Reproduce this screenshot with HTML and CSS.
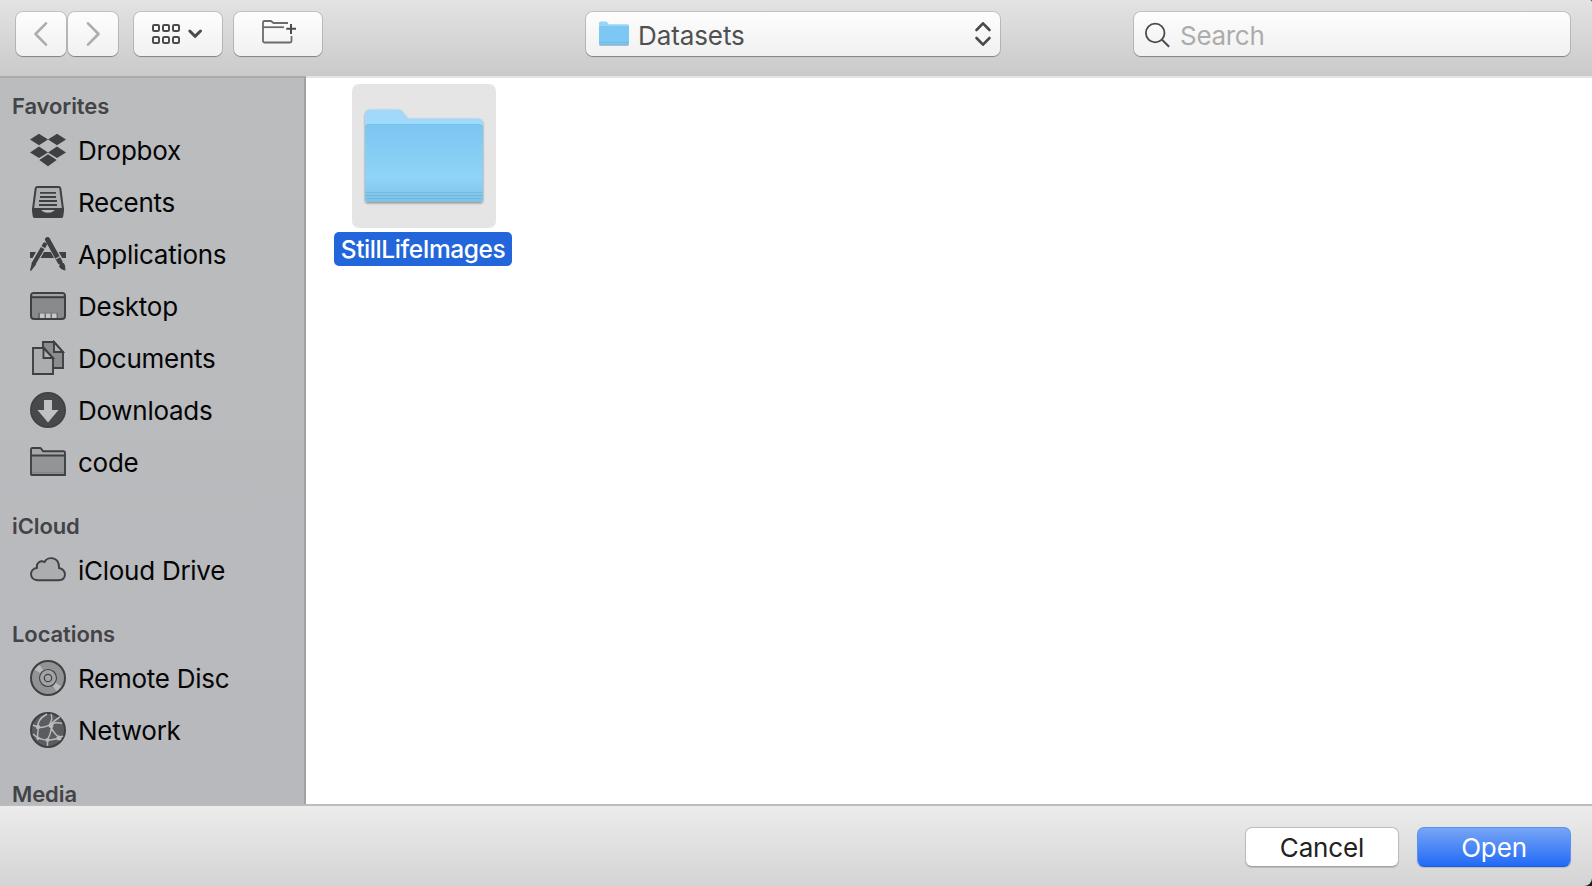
FILE: index.html
```html
<!DOCTYPE html>
<html lang="en">
<head>
<meta charset="utf-8">
<title>Open</title>
<link rel="stylesheet" href="styles.css">
</head>
<body>
<div class="window">
  <header class="toolbar">
    <div class="nav">
      <button class="btn nav-btn" aria-label="Back"><svg width="50" height="44" viewBox="0 0 50 44"><path d="M30 11.300L19.500 22l10.500 10.700" fill="none" stroke="#adadad" stroke-width="2.600" stroke-linecap="round" stroke-linejoin="round"/></svg></button>
      <button class="btn nav-btn" aria-label="Forward"><svg width="50" height="44" viewBox="0 0 50 44"><path d="M20 11.300L30.500 22 20 32.700" fill="none" stroke="#adadad" stroke-width="2.600" stroke-linecap="round" stroke-linejoin="round"/></svg></button>
    </div>
    <button class="btn view-btn" aria-label="View"><svg width="88" height="44" viewBox="-1 -1 88 44" fill="none" stroke="#4b4b4b"><g stroke-width="2"><rect x="18" y="12" width="6" height="6" rx="1.300"/><rect x="28" y="12" width="6" height="6" rx="1.300"/><rect x="38" y="12" width="6" height="6" rx="1.300"/><rect x="18" y="24" width="6" height="6" rx="1.300"/><rect x="28" y="24" width="6" height="6" rx="1.300"/><rect x="38" y="24" width="6" height="6" rx="1.300"/></g><path d="M54.800 18l5.200 5.300L65.500 18" stroke-width="3" stroke-linecap="round" stroke-linejoin="round"/></svg></button>
    <button class="btn folder-btn" aria-label="New Folder"><svg width="88" height="44" viewBox="-1 -1 88 44" fill="none" stroke="#6b6b6b" stroke-width="1.800"><path d="M53 10H38.500l-2.500-2h-6.500q-1.500 0-1.500 1.500V28q0 1.500 1.500 1.500H55q1.500 0 1.500-1.500v-5"/><path d="M28 14.200H49"/><path d="M51.300 15.700h9.700M56 11v10" stroke="#4b4b4b" stroke-width="2"/></svg></button>
    <button class="btn popup"><svg class="mini-folder" width="32" height="28" viewBox="0 0 32 28"><path d="M1 3q0-1.500 1.500-1.500h6L11 4.200h18.500Q31 4.200 31 5.700V24H1z" fill="#98d5f7"/><rect x="1" y="6" width="30" height="19" rx="1" fill="#7cc7f3"/><path d="M1 22.500H31" stroke="#74b9e4"/><path d="M1.500 25.200h29" stroke="#84a8bd"/></svg><span class="popup-label">Datasets</span><svg class="arrows" width="18" height="28" viewBox="0 0 18 28"><path d="M2.500 10L9 3.300 15.500 10M2.500 18L9 24.700 15.500 18" fill="none" stroke="#494949" stroke-width="2.600" stroke-linecap="round" stroke-linejoin="round"/></svg></button>
    <div class="btn search"><svg width="28" height="28" viewBox="0 0 28 28" fill="none" stroke="#4b4b4b"><circle cx="11.200" cy="13" r="9.300" stroke-width="1.800"/><path d="M17.800 19.500l7.300 7.300" stroke-width="2"/></svg><span class="search-label">Search</span></div>
  </header>
  <div class="content">
    <nav class="sidebar">
      <h2>Favorites</h2>
      <ul>
        <li><svg viewBox="0 0 36 36" fill="#3f4042"><path d="M9 1.800l9 5.700-9 5.700-9-5.700zM27 1.800l9 5.700-9 5.700-9-5.700zM9 14.600l9 5.800-9 5.700-9-5.700zM27 14.600l9 5.800-9 5.700-9-5.700zM18 22.300l8.700 5.700L18 34.300 9.300 28z"/></svg><span>Dropbox</span></li>
        <li><svg viewBox="0 0 36 36"><path d="M7.500 3h21q1.500 0 1.800 1.500L33 25H3L5.700 4.500Q6 3 7.500 3z" fill="#aeafb0" stroke="#3f4042" stroke-width="2"/><path d="M2 24h8q2 4.800 8 4.800T26 24h8v3l-.8 5.500q-.3 1.500-2 1.500H4.800q-1.700 0-2-1.500L2 27z" fill="#3f4042"/><path d="M10 8.800h16M10 13h16M9 17h18M9 21h18" stroke="#3f4042" stroke-width="1.800"/></svg><span>Recents</span></li>
        <li><svg viewBox="0 0 36 36" fill="#3f4042"><path d="M0 16h36v6H0z"/><path d="M17.500 3L32 29M15 7L3 28.500" stroke="#bbbcbe" stroke-width="7"/><path d="M17.500 3.500L30 26" stroke="#3f4042" stroke-width="5" stroke-linecap="round"/><path d="M14.800 8.500L4 27" stroke="#3f4042" stroke-width="4.200" stroke-linecap="round"/><path d="M2 26l4.200 2.300L1 35 0 34.500zM30 28q4-3 5 1.500l.5 5q-4.500-.5-6.500-4z"/><path d="M10.700 10.300l4.200 2.500M25.600 23l5.500-3" stroke="#bbbcbe" stroke-width="1.100"/></svg><span>Applications</span></li>
        <li><svg viewBox="0 0 36 36"><rect x="1" y="5" width="34" height="26" rx="3" fill="#898a8c" stroke="#3f4042" stroke-width="2"/><path d="M2.500 7h31" stroke="#aaabad" stroke-width="1.500"/><path d="M1 9.200h34" stroke="#3f4042" stroke-width="2"/><path d="M8 30v-5.200h20V30z" fill="#6d6e70"/><path d="M10 25.500h4.500V30H10zM16 25.500h4.500V30H16zM22 25.500h4.500V30H22z" fill="#c7c8ca"/></svg><span>Desktop</span></li>
        <li><svg viewBox="0 0 36 36" stroke="#3f4042" stroke-width="1.900"><path d="M13 2h11l9 10v16H13z" fill="#8b8c8e"/><path d="M24 2v10h9z" fill="#b1b2b4"/><path d="M3 8h11l9 10v16H3z" fill="#acadaf"/><path d="M13.500 8v10H23z" fill="#b1b2b4"/></svg><span>Documents</span></li>
        <li><svg viewBox="0 0 36 36"><circle cx="18" cy="18" r="17.200" fill="#48494b" stroke="#3f4042" stroke-width="1.600"/><path d="M14 8h8v10h6.500L18 30.500 7.500 18H14z" fill="#c0c1c3"/></svg><span>Downloads</span></li>
        <li><svg viewBox="0 0 36 36"><path d="M1 30V5.500Q1 4 2.500 4h7.300q1 0 1.700 1l1.500 2.200h20.500Q35 7.200 35 8.700V31H2q-1 0-1-1z" fill="#a6a7a9" stroke="#3f4042" stroke-width="1.900"/><path d="M2 12h32v18H2z" fill="#939496"/><path d="M1 11.500h34" stroke="#3f4042" stroke-width="1.900"/><path d="M2 28.800h32" stroke="#7e7f81"/></svg><span>code</span></li>
      </ul>
      <h2>iCloud</h2>
      <ul>
        <li><svg viewBox="0 0 36 36"><path d="M7.500 28.300C-1 28-1 17 7 15.800 6 11 10.500 8 14.500 10 18 3.500 29.500 5 29 16 37 18 37 28 28.500 28.300z" fill="#acadaf" stroke="#3f4042" stroke-width="1.900"/></svg><span>iCloud Drive</span></li>
      </ul>
      <h2>Locations</h2>
      <ul>
        <li><svg viewBox="0 0 36 36"><circle cx="18" cy="18" r="17" fill="#929395"/><path d="M18 18L4.500 9.500 9.500 4.500zM18 18l13.500 8.500-5 5z" fill="#b9babc"/><g fill="none" stroke="#3f4042"><circle cx="18" cy="18" r="17" stroke-width="2"/><circle cx="18" cy="18" r="8.500" fill="#a3a4a6" stroke-width="1.100"/><circle cx="18" cy="18" r="3.700" stroke-width="1.200"/></g></svg><span>Remote Disc</span></li>
        <li><svg viewBox="0 0 36 36"><circle cx="18" cy="18" r="17" fill="#5b5c5f" stroke="#3f4042" stroke-width="2"/><g fill="none" stroke="#b9babc" stroke-width="1.500"><path d="M17 2C10 6 7 11 8 16s-2 7 0 12M21 2q2 5-1 9.500M17.500 34v-6M3 13l5 2.500q8 .5 14-4.500T30 5M22 12q5-2 10-.5M21.500 15q-1 8-4 12.500M21 15q3 7 9 11M3 22q6 6 14.500 6T33 24"/></g><g fill="#b9babc"><circle cx="8" cy="15" r="2.200"/><circle cx="21" cy="13.500" r="2.500"/><circle cx="17.500" cy="28" r="2"/><circle cx="29" cy="26" r="2.500"/><circle cx="8" cy="26" r="1.600"/></g></svg><span>Network</span></li>
      </ul>
      <h2>Media</h2>
    </nav>
    <main class="files">
      <figure class="file">
        <div class="thumb">
          <svg width="124" height="104" viewBox="0 0 124 104">
            <defs>
              <linearGradient id="front" x1="0" y1="0" x2="0" y2="1"><stop offset="0" stop-color="#7cc6f2"/><stop offset=".7" stop-color="#8fd4f8"/><stop offset=".84" stop-color="#86cbf0"/><stop offset="1" stop-color="#7dc0e8"/></linearGradient>
              <filter id="shadow" x="-5%" y="-5%" width="110%" height="115%"><feDropShadow dx="0" dy="1.200" stdDeviation="1" flood-color="#000" flood-opacity=".4"/></filter>
            </defs>
            <g filter="url(#shadow)"><path d="M3 8q0-5.500 5-5.500h28.500q3 0 4.500 2.500l3.500 5q1 1.500 4 1.500H116q5 0 5 5v75.500q0 3-3 3H6q-3 0-3-3z" fill="#a0d9fa"/><path d="M3 21q0-4 4-4h110q4 0 4 4v70.500q0 3.500-3.500 3.500h-111Q3 95 3 91.500z" fill="url(#front)"/></g>
            <path d="M3.500 85.500h117M3.500 88.500h117M3.500 91.500h117" stroke="#6db2dc" stroke-opacity=".7" stroke-width="1"/>
            <path d="M3.500 20.500q1-3 4-3h109q3 0 4 3" fill="none" stroke="#70bae7" stroke-opacity=".7" stroke-width=".8"/>
          </svg>
        </div>
        <figcaption>StillLifeImages</figcaption>
      </figure>
    </main>
  </div>
  <footer class="actions">
    <button class="action cancel"><span>Cancel</span></button>
    <button class="action open"><span>Open</span></button>
  </footer>
</div>
</body>
</html>
```

FILE: styles.css
```css
* { box-sizing: border-box; }
body { margin: 0; background: #1c1c1c; font-family: Inter, "Liberation Sans", sans-serif; font-size: 26px; }
button { font: inherit; padding: 0; border: 0; }
svg { display: block; flex: none; }
.window { display: flex; flex-direction: column; width: 1592px; height: 886px; overflow: hidden; border-radius: 0 2px 8px 0; }
.toolbar { display: flex; height: 76px; padding: 12px 22px 0 16px; background: linear-gradient(#e3e3e3, #cacaca); }
.btn { display: flex; align-items: center; height: 44px; border-radius: 7px; background: linear-gradient(#fdfdfd, #f1f1f1); box-shadow: 0 0 0 1px rgba(0, 0, 0, .13), 0 1px 1px rgba(0, 0, 0, .28); color: #505050; }
.nav { display: flex; gap: 2px; margin-right: 16px; }
.nav-btn { width: 50px; }
.view-btn { width: 88px; margin-right: 12px; }
.folder-btn { width: 88px; }
.popup { width: 414px; margin-left: 264px; padding: 0 8px 0 12px; }
.popup-label { flex: 1; padding-top: 2px; margin-left: 8px; text-align: left; letter-spacing: -.1px; }
.search { width: 436px; margin-left: auto; padding-left: 10px; color: #acacac; }
.search-label { padding-top: 2px; margin-left: 8px; letter-spacing: -.3px; }
.content { display: flex; flex: 1; min-height: 0; }
.sidebar { width: 306px; padding-top: 9px; overflow: hidden; background: linear-gradient(#bbbcbe, #b8b9bc); border-right: 2px solid #a0a1a4; border-top: 2px solid #a9a9aa; color: #050505; }
.sidebar h2 { margin: 19px 0 0; height: 37px; padding-left: 12px; font-size: 22px; font-weight: 600; line-height: 39px; letter-spacing: -.1px; color: #434447; }
.sidebar h2:first-child { margin-top: 0; }
.sidebar ul { margin: 0; padding: 0; list-style: none; }
.sidebar li { display: flex; align-items: center; height: 52px; padding-left: 30px; gap: 12px; letter-spacing: -.27px; }
.sidebar li svg { width: 36px; height: 36px; }
.files { flex: 1; padding: 6px 0 0 28px; background: #fff; border-top: 2px solid #e4e4e4; }
.file { display: flex; flex-direction: column; align-items: center; width: 178px; margin: 0; }
.thumb { display: flex; width: 144px; height: 144px; padding: 23px 0 0 10px; margin-left: 2px; border-radius: 7px; background: #e5e5e5; }
.file figcaption { width: 178px; height: 34px; margin-top: 4px; border-radius: 5px; background: #2366db; color: #fff; font-size: 24.5px; font-weight: 500; line-height: 34px; letter-spacing: -.42px; text-align: center; }
.actions { display: flex; justify-content: flex-end; gap: 18px; height: 82px; padding: 21px 21px 0 0; border-top: 2px solid #bcbcbc; background: linear-gradient(#ececec, #d4d4d4); }
.action { width: 154px; height: 40px; border-radius: 7px; letter-spacing: -.15px; }
.cancel { border: 1px solid #bdbdbd; border-bottom-color: #a3a3a3; background: #fff; color: #222; box-shadow: 0 1px 1px rgba(0, 0, 0, .15); }
.open { border: 1px solid #5d93ee; border-bottom-color: #1d5de0; background: linear-gradient(#77a5f6, #226af6); color: #fff; box-shadow: 0 1px 1px rgba(0, 0, 0, .15); }
```
